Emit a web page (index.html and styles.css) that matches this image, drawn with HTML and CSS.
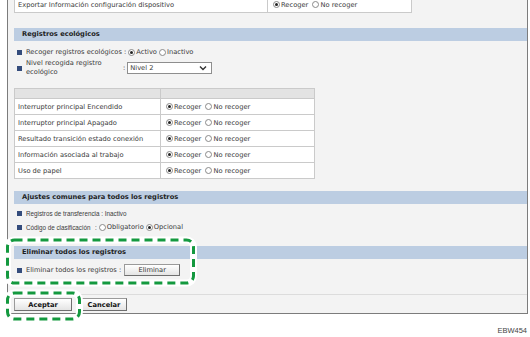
FILE: index.html
```html
<!DOCTYPE html>
<html lang="es">
<head>
  <meta charset="UTF-8" />
  <title>Registros ecológicos</title>
  <link rel="stylesheet" href="styles.css">
</head>
<body>
  <div class="frame">
    <table class="grid top-grid">
      <tr>
        <td class="col-a">Exportar Información configuración dispositivo</td>
        <td><span class="radio on"></span>Recoger <span class="radio"></span>No recoger</td>
      </tr>
    </table>

    <div class="sec-head">Registros ecológicos</div>
    <div class="item item-first">
      <span class="bullet"></span>
      <span>Recoger registros ecológicos : </span>
      <span class="radio on"></span>Activo <span class="radio"></span>Inactivo
    </div>
    <div class="item item-tall">
      <span class="bullet"></span>
      <span class="lbl lbl-wide">Nivel recogida registro ecológico</span>
      <span>: </span>
      <div class="select">
        <span>Nivel 2</span>
        <svg width="8" height="6" viewBox="0 0 8 6"><path d="M1 1.5 L4 4.5 L7 1.5" fill="none" stroke="#333" stroke-width="1.4"/></svg>
      </div>
    </div>

    <table class="grid log-grid">
      <tr class="head-row"><td class="col-b"></td><td></td></tr>
      <tr><td class="col-b">Interruptor principal Encendido</td><td><span class="radio on"></span>Recoger <span class="radio"></span>No recoger</td></tr>
      <tr><td class="col-b">Interruptor principal Apagado</td><td><span class="radio on"></span>Recoger <span class="radio"></span>No recoger</td></tr>
      <tr><td class="col-b">Resultado transición estado conexión</td><td><span class="radio on"></span>Recoger <span class="radio"></span>No recoger</td></tr>
      <tr><td class="col-b">Información asociada al trabajo</td><td><span class="radio on"></span>Recoger <span class="radio"></span>No recoger</td></tr>
      <tr><td class="col-b">Uso de papel</td><td><span class="radio on"></span>Recoger <span class="radio"></span>No recoger</td></tr>
    </table>

    <div class="sec-head sec-two">Ajustes comunes para todos los registros</div>
    <div class="item item-second">
      <span class="bullet"></span>
      <span class="small">Registros de transferencia : Inactivo</span>
    </div>
    <div class="item">
      <span class="bullet"></span>
      <span class="small lbl-narrow">Código de clasificación</span>
      <span class="small">: </span>
      <span class="radio"></span>Obligatorio <span class="radio on"></span>Opcional
    </div>

    <div class="sec-head sec-three">Eliminar todos los registros</div>
    <div class="item item-delete">
      <span class="bullet"></span>
      <span>Eliminar todos los registros : </span>
      <button class="btn btn-delete">Eliminar</button>
    </div>

    <div class="actions">
      <button class="btn btn-main btn-ok">Aceptar</button>
      <button class="btn btn-main btn-cancel">Cancelar</button>
    </div>
  </div>

  <div class="fig-code">EBW454</div>

  <!-- callout marks drawn over the screenshot -->
  <svg class="callouts" width="530" height="337" viewBox="0 0 530 337">
    <rect x="7.5" y="240" width="186" height="43" rx="7" fill="none" stroke="#fff" stroke-width="7"/>
    <rect x="7.5" y="293" width="72" height="26" rx="7" fill="none" stroke="#fff" stroke-width="7"/>
    <rect x="7.5" y="240" width="186" height="43" rx="7" fill="none" stroke="#14993f" stroke-width="3" stroke-dasharray="8 5"/>
    <rect x="7.5" y="293" width="72" height="26" rx="7" fill="none" stroke="#14993f" stroke-width="3" stroke-dasharray="8 5"/>
  </svg>
</body>
</html>
```

FILE: styles.css
```css
body {
  margin: 0;
  background: #fff;
  font-family: "DejaVu Sans", Verdana, sans-serif;
  font-size: 6.7px;
  color: #3a3a3a;
  position: relative;
  height: 337px;
  overflow: hidden;
}
.frame {
  box-sizing: border-box;
  margin-left: 7px;
  width: 521px;
  background: #f3f3f3;
  border: 1px solid #7c7c7c;
  border-top: 0;
  padding: 0 0 1px 6px;
}
.grid {
  border-collapse: collapse;
  background: #fff;
}
.grid td {
  border: 1px solid #cacaca;
  padding: 0 0 0 3px;
  height: 15px;
  white-space: nowrap;
}
.top-grid {
  margin-top: -4px;
  width: 398px;
}
.top-grid .col-a {
  width: 249px;
}
.sec-head {
  margin-top: 15px;
  height: 13px;
  line-height: 13px;
  padding-left: 8px;
  background: #bccde2;
  font-weight: bold;
  color: #1f1f1f;
}
.item {
  display: flex;
  align-items: center;
  height: 12px;
  margin-top: 2px;
  white-space: nowrap;
}
.item-first {
  margin-top: 5px;
}
.item-tall {
  height: 18px;
  margin-top: 1px;
}
.item-second {
  margin-top: 3px;
}
.item-delete {
  height: 14px;
  margin-top: 4px;
}
.bullet {
  width: 5px;
  height: 5px;
  background: #344c7c;
  margin: 0 4px 0 3px;
  flex: none;
}
.small {
  font-family: "Liberation Sans", Arial, sans-serif;
  font-size: 6.3px;
}
.lbl {
  line-height: 9px;
}
.lbl-wide {
  white-space: normal;
  width: 97px;
}
.lbl-narrow {
  width: 69px;
}
.radio {
  display: inline-block;
  box-sizing: border-box;
  width: 7px;
  height: 7px;
  border: 1px solid #8a8a8a;
  border-radius: 50%;
  background: #fff;
  margin: 0 1px 0 2px;
  vertical-align: -1px;
  position: relative;
}
.radio.on::after {
  content: "";
  position: absolute;
  left: 1px;
  top: 1px;
  width: 3px;
  height: 3px;
  border-radius: 50%;
  background: #222;
}
.select {
  box-sizing: border-box;
  width: 85px;
  height: 12px;
  margin-left: 2px;
  background: #fff;
  border: 1px solid #8e8e8e;
  display: flex;
  align-items: center;
  justify-content: space-between;
  padding: 0 4px 0 2px;
}
.log-grid {
  margin-top: 11px;
  width: 301px;
}
.log-grid .col-b {
  width: 142px;
}
.log-grid .head-row td {
  height: 9px;
  background: #e3e3e3;
}
.sec-two {
  margin-top: 12px;
}
.sec-three {
  margin-top: 13px;
}
.btn {
  font-family: "DejaVu Sans", Verdana, sans-serif;
  font-size: 6.7px;
  color: #333;
  background: linear-gradient(#ffffff, #e4e4e4);
  border: 1px solid #9a9a9a;
  border-right-color: #6e6e6e;
  border-bottom-color: #6e6e6e;
  padding: 0;
  margin: 0;
}
.btn-delete {
  width: 56px;
  height: 12px;
  margin-left: 3px;
}
.actions {
  margin: 17px 0 0 -6px;
  border-top: 1px solid #dcdcdc;
  padding: 3px 0 1px 6px;
  display: flex;
  gap: 9px;
}
.btn-main {
  height: 13px;
  font-weight: bold;
  color: #111;
}
.btn-ok {
  width: 58px;
}
.btn-cancel {
  width: 46px;
}
.fig-code {
  text-align: right;
  padding-right: 3px;
  margin-top: 12px;
  font-family: "Liberation Sans", Arial, sans-serif;
  font-size: 7.5px;
  color: #444;
}
.callouts {
  position: absolute;
  left: 0;
  top: 0;
  pointer-events: none;
}
```
